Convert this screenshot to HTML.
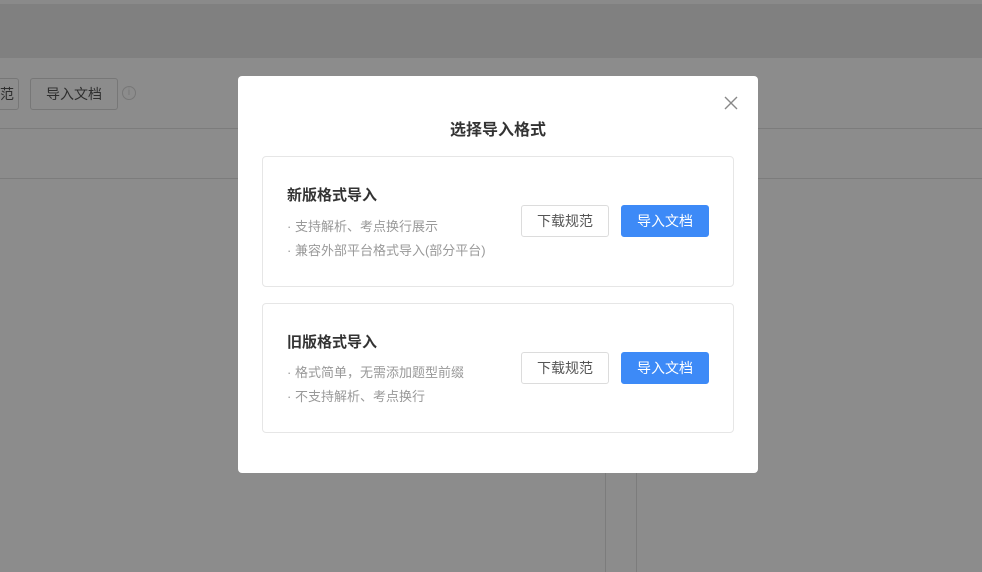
<!DOCTYPE html>
<html><head><meta charset="utf-8"><style>
*{margin:0;padding:0;box-sizing:border-box}
body{width:982px;height:572px;overflow:hidden;background:#8c8c8c;position:relative;font-family:"Liberation Sans","Noto Sans CJK SC",sans-serif}
.a{position:absolute}
.btn{position:absolute;border:1px solid #dcdcdc;border-radius:3px;background:#fff;color:#555;font-size:14px;text-align:center;line-height:30px;width:88px;height:32px}
.pri{background:#3d8af7;border-color:#3d8af7;color:#fff}
.card{position:absolute;left:24px;width:472px;border:1px solid #e6e6e6;border-radius:4px;background:#fff}
.t{position:absolute;left:24px;font-size:15px;font-weight:bold;color:#333}
.d{position:absolute;left:24px;font-size:13px;color:#999}
</style></head><body>
<div class="a" style="left:0;top:0;width:982px;height:4px;background:#8a8a8a"></div>
<div class="a" style="left:0;top:4px;width:982px;height:54px;background:#808080"></div>
<div class="a" style="left:0;top:128px;width:982px;height:1px;background:#7c7c7c"></div>
<div class="a" style="left:0;top:178px;width:982px;height:1px;background:#7c7c7c"></div>
<div class="a" style="left:605px;top:179px;width:1px;height:393px;background:#7c7c7c"></div>
<div class="a" style="left:636px;top:179px;width:1px;height:393px;background:#7c7c7c"></div>
<div class="a" style="left:-10px;top:78px;width:29px;height:32px;border:1px solid #777;border-radius:3px;font-size:14px;color:#2e2e2e;line-height:30px;text-align:right;padding-right:4px">范</div>
<div class="a" style="left:30px;top:78px;width:88px;height:32px;border:1px solid #777;border-radius:3px;font-size:14px;color:#2e2e2e;line-height:30px;text-align:center">导入文档</div>
<div class="a" style="left:122px;top:86px;width:14px;height:14px;border:1px solid #777;border-radius:50%;font-size:10px;color:#777;text-align:center;line-height:12px">i</div>
<div class="a" style="left:238px;top:76px;width:520px;height:397px;background:#fff;border-radius:4px">
<svg class="a" style="left:486px;top:20px" width="14" height="14" viewBox="0 0 14 14"><path d="M1 1L13 13M13 1L1 13" stroke="#888" stroke-width="1.4"/></svg>
<div class="a" style="left:0;top:40px;width:520px;text-align:center;font-size:16px;font-weight:bold;color:#333">选择导入格式</div>
<div class="card" style="top:80px;height:131px">
<div class="t" style="top:27px">新版格式导入</div>
<div class="d" style="top:59px">· 支持解析、考点换行展示</div>
<div class="d" style="top:83px">· 兼容外部平台格式导入(部分平台)</div>
<div class="btn" style="left:258px;top:48px">下载规范</div>
<div class="btn pri" style="left:358px;top:48px">导入文档</div>
</div>
<div class="card" style="top:227px;height:130px">
<div class="t" style="top:27px">旧版格式导入</div>
<div class="d" style="top:58px">· 格式简单，无需添加题型前缀</div>
<div class="d" style="top:82px">· 不支持解析、考点换行</div>
<div class="btn" style="left:258px;top:48px">下载规范</div>
<div class="btn pri" style="left:358px;top:48px">导入文档</div>
</div>
</div>
</body></html>
